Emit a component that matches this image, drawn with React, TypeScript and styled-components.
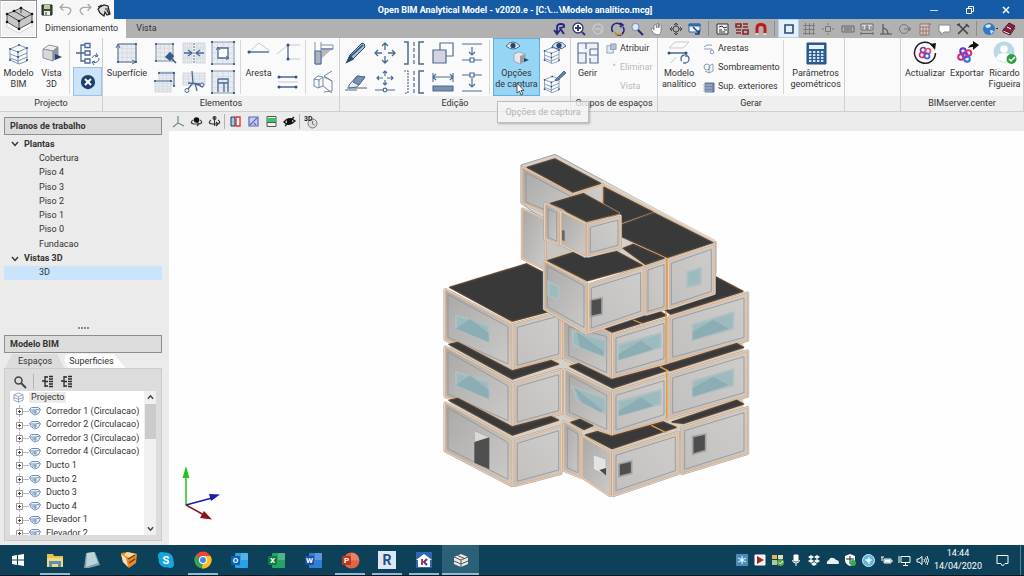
import React from "react";
import styled, { createGlobalStyle, css } from "styled-components";

const NAVY = "#4b6a96";
const SOFT = "#c3c9d2";
const INK = "#2b2b2b";

const GlobalStyle = createGlobalStyle`
  *, *::before, *::after { box-sizing: border-box; }
  html, body { margin: 0; padding: 0; }
  body {
    font-family: Roboto, "Open Sans", sans-serif;
    font-size: 9px;
    line-height: 11px;
    color: #333;
    background: #ebebeb;
  }
  button {
    font: inherit; color: inherit; background: none; border: 0; padding: 0; margin: 0;
  }
  ul { list-style: none; margin: 0; padding: 0; }
  svg { display: block; flex: none; }
`;

/* ---------- frame ---------- */

const Window = styled.div`
  display: flex;
  flex-direction: column;
  min-height: 100vh;
`;

const Header = styled.header`
  display: grid;
  grid-template-columns: 37px 1fr;
  grid-template-rows: 19px 19px;
`;

const AppButton = styled.button`
  grid-row: 1 / 3;
  display: flex;
  align-items: center;
  justify-content: center;
  background: #f2f2f2;
  border: 1px solid #8f8f8f;
  border-left-color: #cfcfcf;
  box-shadow: inset 0 0 0 1px #fff;
`;

const TitleBar = styled.div`
  display: flex;
  background: #155ba6;
`;

const QuickAccess = styled.div`
  display: flex;
  width: 77px;
  background: #f7f7f7;
`;

const Cell = styled.button<{ $muted?: boolean; $on?: boolean }>`
  flex: 1;
  display: flex;
  align-items: center;
  justify-content: center;
  opacity: ${(p) => (p.$muted ? 0.7 : 1)};
  ${(p) => p.$on && css`background: #e3effa; border: 1px solid #b7cfe4;`}
`;

const Title = styled.h1`
  flex: 1;
  margin: 0;
  font-size: 9px;
  line-height: 20px;
  font-weight: 700;
  text-align: center;
  color: #fff;
  white-space: nowrap;
`;

const WindowControls = styled.div`
  display: flex;
  width: 108px;
`;

const TabStrip = styled.div`
  display: flex;
  background: #b1b1b1;
`;

const RibbonTab = styled.button<{ $active?: boolean }>`
  padding: 0 ${(p) => (p.$active ? 8 : 10)}px;
  line-height: 19px;
  background: ${(p) => (p.$active ? "#fafafa" : "transparent")};
`;

const ViewTools = styled.div`
  display: flex;
  align-items: stretch;
  width: 474px;
  margin-left: auto;
`;

const ToolRun = styled.div<{ $w: number }>`
  display: flex;
  width: ${(p) => p.$w}px;
`;

const Rule = styled.span<{ $gap?: number; $light?: boolean }>`
  flex: none;
  width: 1px;
  margin: 2px ${(p) => p.$gap ?? 3}px;
  background: ${(p) => (p.$light ? "#b4b4b4" : "#8d8d8d")};
`;

/* ---------- ribbon ---------- */

const Ribbon = styled.div`
  display: flex;
  height: 74px;
  background: #fafafa;
  border-bottom: 1px solid #d0d0d0;
`;

const Group = styled.section<{ $w?: number }>`
  display: flex;
  flex-direction: column;
  border-right: 1px solid #cfcfcf;
  ${(p) => (p.$w ? css`flex: none; width: ${p.$w}px;` : css`flex: 1;`)}
`;

const GroupBody = styled.div<{ $pad?: number }>`
  flex: 1;
  display: flex;
  padding: 0 0 0 ${(p) => p.$pad ?? 0}px;
`;

const GroupLabel = styled.h2`
  margin: 0;
  height: 15px;
  font-size: 9px;
  line-height: 15px;
  font-weight: 400;
  text-align: center;
  white-space: nowrap;
  background: #efefef;
`;

const Big = styled.button<{ $w: number; $hot?: boolean }>`
  flex: none;
  width: ${(p) => p.$w}px;
  height: 58px;
  display: flex;
  flex-direction: column;
  align-items: center;
  gap: 3px;
  padding-top: 3px;
  white-space: pre;
  text-align: center;
  ${(p) => p.$hot && css`background: #97d5f5; box-shadow: inset 0 0 0 1px #62b0df;`}
`;

const Pairs = styled.div`
  display: grid;
  grid-auto-flow: column;
  grid-template-rows: 29px 29px;
  grid-auto-columns: 29px;
`;

const Small = styled.button<{ $on?: boolean }>`
  display: flex;
  align-items: center;
  justify-content: center;
  ${(p) => p.$on && css`background: #cde4f8; border: 1px solid #9cc4e6;`}
`;

const Split = styled.span`
  flex: none;
  width: 1px;
  margin: 2px 3px;
  background: #d6d6d6;
`;

const Lines = styled.div`
  display: flex;
  flex-direction: column;
  padding: 1px 0 0 4px;
`;

const Line = styled.button<{ $off?: boolean }>`
  display: flex;
  align-items: center;
  gap: 3px;
  height: 19px;
  white-space: nowrap;
  color: ${(p) => (p.$off ? "#b9b9b9" : "inherit")};
`;

const Anchor = styled.div`
  position: relative;
  flex: none;
`;

const Tooltip = styled.div`
  position: absolute;
  z-index: 2;
  left: 4px;
  top: 63px;
  width: 92px;
  line-height: 20px;
  text-align: center;
  white-space: nowrap;
  color: #b3b3b3;
  background: rgba(246, 246, 246, 0.75);
  border: 1px solid #bdbdbd;
  box-shadow: 1px 1px 2px rgba(0, 0, 0, 0.25);
`;

const Pointer = styled.svg`
  position: absolute;
  z-index: 3;
  left: 23px;
  top: 44px;
`;

/* ---------- work area ---------- */

const Work = styled.main`
  flex: 1;
  display: flex;
`;

const Sidebar = styled.aside`
  flex: none;
  width: 169px;
  display: flex;
  flex-direction: column;
  padding: 5px 7px 4px 4px;
`;

const PanelTitle = styled.h3`
  margin: 0;
  padding-left: 5px;
  height: 18px;
  font-size: 9px;
  line-height: 16px;
  font-weight: 700;
  background: #dcdcdc;
  border: 1px solid #8e8e8e;
`;

const PlanTree = styled.ul`
  display: grid;
  grid-auto-rows: 1fr;
  height: 143px;
  margin-top: 2px;
  margin-bottom: 42px;
`;

const PlanRow = styled.li<{ $head?: boolean; $on?: boolean }>`
  display: flex;
  align-items: center;
  gap: 5px;
  padding-left: ${(p) => (p.$head ? 7 : 35)}px;
  font-weight: ${(p) => (p.$head ? 700 : 400)};
  background: ${(p) => (p.$on ? "#c9e4fb" : "transparent")};
`;

const Grip = styled.div`
  display: flex;
  justify-content: center;
  gap: 1px;
  padding: 5px 0;
  height: 13px;
`;

const Dot = styled.i`
  width: 2px;
  height: 2px;
  background: #8a8a8a;
`;

const ModelTabs = styled.div`
  display: flex;
  height: 15px;
  padding: 1px 0 0 1px;
`;

const ModelTab = styled.button<{ $active?: boolean }>`
  height: 14px;
  padding: ${(p) => (p.$active ? "0 12px 0 13px" : "0 12px 0 5px")};
  line-height: 15px;
  background: ${(p) => (p.$active ? "#dcdcdc" : "#fdfdfd")};
  clip-path: ${(p) =>
    p.$active ? "polygon(12% 0, 88% 0, 100% 100%, 0 100%)" : "polygon(3% 0, 80% 0, 100% 100%, 6% 100%, 0 50%)"};
`;

const ModelPanel = styled.div`
  flex: 1;
  display: flex;
  flex-direction: column;
  padding: 3px 5px 5px;
  background: #dcdcdc;
  border: 1px solid #cbcbcb;
`;

const ModelTools = styled.div`
  display: flex;
  height: 19px;
  width: 66px;
`;

const TreeBox = styled.div`
  flex: 1 1 143px;
  height: 143px;
  display: flex;
  overflow: hidden;
  background: #fff;
`;

const SpaceTree = styled.ul`
  flex: 1;
  display: grid;
  grid-auto-rows: 1fr;
  height: 149px;
`;

const SpaceRow = styled.li<{ $root?: boolean }>`
  display: flex;
  align-items: center;
  gap: 5px;
  padding-left: ${(p) => (p.$root ? 3 : 6)}px;
  white-space: nowrap;
`;

const RootName = styled.span`
  padding: 0 2px;
  background: #ececec;
`;

const Scroll = styled.div`
  width: 12px;
  display: flex;
  flex-direction: column;
  align-items: center;
  justify-content: space-between;
  padding: 3px 0;
  background: #f0f0f0;
`;

const Thumb = styled.div`
  width: 11px;
  height: 35px;
  margin: 3px 0 auto;
  background: #cbcbcb;
`;

const Stage = styled.section`
  flex: 1;
  display: flex;
  flex-direction: column;
`;

const StageTools = styled.div`
  display: flex;
  height: 19px;
`;

const Canvas = styled.div`
  flex: 1;
  display: flex;
  background: #fefefe;
  svg { flex: 1; min-width: 0; }
`;

/* ---------- taskbar ---------- */

const Taskbar = styled.footer`
  display: flex;
  height: 31px;
  background: #0d4059;
  border-bottom: 1px solid #03141e;
  color: #fff;
`;

const Apps = styled.nav`
  display: flex;
  width: 479px;
`;

const AppCell = styled.button<{ $open?: boolean; $active?: boolean }>`
  flex: 1;
  display: flex;
  align-items: center;
  justify-content: center;
  background-color: ${(p) => (p.$active ? "#2c6078" : "transparent")};
  ${(p) => p.$open && css`
    background-image: linear-gradient(#8fbcd4, #8fbcd4);
    background-repeat: no-repeat;
    background-position: bottom center;
    background-size: ${p.$active ? "100%" : "30px"} 2px;
  `}
`;

const Tray = styled.div`
  display: flex;
  width: 198px;
  margin-left: auto;
`;

const Clock = styled.time`
  width: 54px;
  display: flex;
  flex-direction: column;
  justify-content: center;
  align-items: center;
  gap: 2px;
  font-size: 9px;
  line-height: 11px;
`;

const Notice = styled.div`
  display: flex;
  width: 36px;
  border-right: 1px solid #5f8090;
  margin-right: 3px;
`;

/* ---------- icons ---------- */

type IconProps = { s?: number; box?: number; c?: string; w?: number; children: React.ReactNode };
const Svg = ({ s = 24, box = 24, c = NAVY, w = 1, children }: IconProps) => (
  <svg width={s} height={s} viewBox={`0 0 ${box} ${box}`} fill="none" stroke={c} strokeWidth={w} aria-hidden="true">
    {children}
  </svg>
);

const dots = (pts: number[][], r = 1.1) =>
  pts.map(([x, y]) => <circle key={`${x}-${y}`} cx={x} cy={y} r={r} fill="#2f5384" stroke="none" />);

const Mesh = ({ x = 4, y = 4, w = 16, h = 16 }) => (
  <>
    <rect x={x} y={y} width={w} height={h} fill="#e8ebf0" stroke={SOFT} strokeWidth=".7" />
    {[1, 2, 3].map((i) => (
      <path key={i} d={`M${x + (w * i) / 4} ${y}v${h}M${x} ${y + (h * i) / 4}h${w}`} stroke="#cfd5dd" strokeWidth=".6" />
    ))}
  </>
);

const Stack = ({ c = "#6d88ad" }) => (
  <>
    <path d="M3 8l9-4 8 3v13l-8 3-9-4zM3 8l8 3 9-4M11 11v12M3 13l8 3 9-4M3 17l8 3 9-4" stroke={c} strokeWidth=".9" />
    {dots([[3, 8], [11, 11], [20, 7], [12, 4], [3, 19], [20, 19], [11, 16]], 1)}
  </>
);

const Eye = ({ x = 0, y = 0 }) => (
  <g transform={`translate(${x} ${y})`}>
    <path d="M0 5q7-8 14 0q-7 6-14 0z" fill="#dce6f1" stroke={NAVY} />
    <circle cx="7" cy="4.500" r="2.600" fill="#25476f" stroke="none" />
  </g>
);

const I: Record<string, React.ReactNode> = {
  app: (
    <Svg s={34} box={34} c="#333">
      <path d="M5 20v5l12 6 13-7v-5" fill="#fff" stroke="#c4c4c4" strokeWidth=".7" />
      <path d="M5 12l14-6 11 6v8l-13 7-12-7z" fill="#c8c8c8" strokeWidth=".8" />
      <path d="M5 12l12 7 13-7M17 19v8M12 9l12 7M19 6v5" strokeWidth=".9" />
      {[[5, 12], [12, 9], [19, 6], [30, 12], [17, 19], [5, 20], [30, 20], [17, 27]].map(([x, y]) => (
        <circle key={x * 40 + y} cx={x} cy={y} r="1.300" fill="#111" stroke="none" />
      ))}
    </Svg>
  ),
  save: <Svg s={12} box={12} c="#222"><path d="M1 1h10v10H1z" fill="#3b4b3b" /><path d="M3 1h6v4H3z" fill="#b8d098" stroke="none" /><path d="M3 7h6v4H3z" fill="#eee" stroke="none" /><path d="M5 8v3" /></Svg>,
  undo: <Svg s={13} box={12} c="#888" w={1.2}><path d="M4 1L1 4l3 3M1 4h7q3 1 3 3t-3 4" /></Svg>,
  redo: <Svg s={13} box={12} c="#888" w={1.2}><path d="M8 1l3 3-3 3M11 4H4q-3 1-3 3t3 4" /></Svg>,
  bag: <Svg s={14} box={14} c="#222" w={1.2}><path d="M3 4l4-2 4 1 2 8-3 1-2-3-1 4-4-3-2-4z" fill="#ddd" /><path d="M1 4l4-2M10 7l2 4M8 6h4" /></Svg>,
  min: <Svg s={10} box={10} c="#cfe0f2"><path d="M1 5.500h8" /></Svg>,
  max: <Svg s={10} box={10} c="#fff"><path d="M1.500 3.500h5v5h-5zM3.500 3V1.500h5v5H7" /></Svg>,
  close: <Svg s={10} box={10} c="#fff" w={1.500}><path d="M2 2l6 6M8 2L2 8" /></Svg>,

  bim: <Svg><Stack /></Svg>,
  vista3d: <Svg><path d="M3 8l6-4 9 2-5 4z" fill="#eee" stroke="#8b96a5" /><path d="M3 8l10 2v10L3 17z" fill="#d8d8d8" stroke="#8b96a5" /><path d="M13 10l5-4v9l-5 5z" fill="#8e9299" stroke="#8b96a5" /><path d="M15 13l7 3-7 3z" fill="#23466f" stroke="none" /></Svg>,
  link: <Svg w={1.300}><path d="M9 2.500h5v4H9zM9 10h5v4H9zM9 18h5v4H9zM9 4H5v16h4M0 12h9" /><path d="M16 17a4 4 0 0 1 6-2M23 17a4 4 0 0 1-6 4M20 12l2 3-3 1M18 24l-2-3 3-1" strokeWidth="1" /></Svg>,
  cancel: <Svg s={18}><circle cx="12" cy="12" r="9.500" fill="#1f3f6b" stroke="none" /><path d="M8 8l8 8M16 8l-8 8" stroke="#fff" strokeWidth="2.600" /></Svg>,
  surface: <Svg><Mesh x={3} y={3} w={18} h={18} /><path d="M3 3h18v18H3zM1 7l2-4 2 4M17 19l4 2-4 2" />{dots([[21, 3], [3, 21], [21, 21]])}</Svg>,
  surfPick: <Svg><Mesh x={3} y={3} w={17} h={17} /><path d="M3 3h17v17H3z" stroke="#8a9ab0" />{dots([[3, 3], [20, 3], [3, 20]])}<path d="M13 16l4-4 3 3-3 4zM18 17l5 5" fill="#3a5b87" stroke="#3a5b87" strokeWidth="1.600" /></Svg>,
  surfDup: <Svg><Mesh x={6} y={2} w={15} h={13} /><Mesh x={2} y={11} w={16} h={11} /><path d="M21 2v14M2 11h16M6 3h15" />{dots([[2, 11], [18, 11], [21, 16], [21, 3], [6, 3]])}</Svg>,
  surfJoin: <Svg><Mesh x={1} y={2} w={9} h={20} /><Mesh x={14} y={2} w={9} h={20} /><path d="M12 2v20" strokeDasharray="2 1" /><path d="M2 12h7M6 9l4 3-4 3M22 12h-7M18 9l-4 3 4 3" strokeWidth="1.300" /></Svg>,
  surfCut: <Svg><Mesh x={1} y={3} w={22} h={12} /><path d="M10 1l1 12M11 13l-5 6M11 13l10 4M6 13l12 1M13 13l2 8" strokeWidth="1.300" /><circle cx="5" cy="20.500" r="2" /><circle cx="20" cy="15" r="2" /></Svg>,
  surfIn: <Svg><Mesh x={1} y={1} w={22} h={22} /><path d="M1 1h22v22H1z" stroke="#9aa7ba" /><path d="M7 7h10v10H7z" fill="#fff" strokeWidth="1.300" />{dots([[1, 1], [23, 1], [1, 23], [23, 23]])}<path d="M5 9l2-3 2 3M15 15l3 2-3 2" /></Svg>,
  surfOut: <Svg><Mesh x={1} y={1} w={22} h={22} /><path d="M1 1h22v22H1z" stroke="#9aa7ba" /><path d="M7 9h10v13M7 9v13M7 13h10M13 13v9" fill="none" strokeWidth="1.300" />{dots([[1, 1], [23, 1], [1, 23], [23, 23]])}</Svg>,
  edge: <Svg><path d="M2 11L12 2l11 8" stroke={SOFT} /><path d="M2 11h20" strokeWidth="1.400" />{dots([[2, 11]], 1.500)}</Svg>,
  edgeV: <Svg><path d="M1 13L12 4h12M12 18h12" stroke={SOFT} /><path d="M12 4v14" strokeWidth="1.300" />{dots([[12, 4], [12, 18]], 1.500)}</Svg>,
  edgeH: <Svg><path d="M2 12h20" stroke={SOFT} /><path d="M3 7h17M3 17h17" strokeWidth="1.400" />{dots([[3, 7], [20, 7], [3, 17], [20, 17]], 1.500)}</Svg>,
  wall: <Svg><path d="M3 1v22h6V1M9 4h12v4H9" stroke="#7d92b0" /><path d="M9 9h10L9 18z" fill="#b8b8b8" stroke="none" /><path d="M3 10h6v13H3z" fill="#a9b3c2" /><path d="M9 8h12" /></Svg>,
  project: <Svg c="#7288a7"><path d="M2 9l4-3 5 1v9l-5 2-4-2zM2 9l5 1 4-3M7 10v8M12 6l8-5M12 6l8 5v10M20 11l-8-4M11 16l9 7M12 22l8-1" /></Svg>,
  pencil: <Svg c="#294c78"><path d="M3 21l3-7L18 2q3 0 3 4L9 18z" fill="#a9bcd4" /><path d="M3 21l3-6 3 3zM7 15L19 4" fill="#294c78" strokeWidth="1.500" /></Svg>,
  eraser: <Svg><path d="M3 18h20" stroke="#aaa" strokeWidth="2" /><path d="M5 15l8-9 8 1-8 10-8 1z" fill="#e6eaf0" /><path d="M13 6l8 1-6 8-6-3z" fill="#7990b0" /><path d="M1 20h12" /></Svg>,
  move: <Svg w={1.300}><path d="M12 2v7M12 15v7M2 12h7M15 12h7M9 5l3-3 3 3M9 19l3 3 3-3M5 9l-3 3 3 3M19 9l3 3-3 3" /></Svg>,
  moveP: <Svg w={1.200}><path d="M12 1v5M12 10v5M4 8h6M14 8h6M10 3l2-2 2 2M10 13l2 2 2-2M6 6L4 8l2 2M18 6l2 2-2 2M2 20h8M14 20h8" /><circle cx="12" cy="20" r="1.800" fill="#fff" /></Svg>,
  mirror: <Svg w={1.200}><path d="M2 1h4v22H2M22 1h-5v22h5" strokeWidth="1.500" /><path d="M12 1v22" strokeDasharray="4 2" /></Svg>,
  mirrorC: <Svg w={1.200}><path d="M22 1h-5v22h5" strokeWidth="1.500" /><path d="M2 1h4v22H2" strokeDasharray="2 1" /><path d="M12 1v22" strokeDasharray="4 2" /></Svg>,
  copy: <Svg w={1.200}><path d="M9 2h13v13H9z" fill="#fff" /><path d="M2 9h13v13H2z" fill="#d2d5dd" /></Svg>,
  measure: <Svg w={1.100}><path d="M2 3v9M22 3v9M2 7h20M5 4L2 7l3 3M19 4l3 3-3 3" /><path d="M2 16h20v5H2z" fill="#7990b0" /></Svg>,
  down: <Svg w={1.200}><path d="M2 3h20M12 6v8M9 11l3 3 3-3M2 19h20" /><path d="M10 17h4v4h-4z" fill="#fff" /></Svg>,
  down2: <Svg w={1.200}><path d="M2 5h20M12 8v9M9 14l3 3 3-3M2 21h20" /><path d="M10 3h4v4h-4z" fill="#fff" /></Svg>,
  capture: <Svg><Eye x={1} y={0} /><path d="M9 13l5-2 6 2v7l-5 3-6-3z" fill="#e8e8e8" stroke="#8a97a7" strokeWidth=".7" /><path d="M15 15l5-2v7l-5 3z" fill="#9a9fa6" stroke="none" /><path d="M19 17l5 2-5 2z" fill="#23466f" stroke="none" /></Svg>,
  layersEye: <Svg><g transform="translate(-1 3) scale(.85)"><Stack /></g><Eye x={9} y={0} /></Svg>,
  layersPen: <Svg><g transform="translate(-1 3) scale(.85)"><Stack /></g><path d="M12 10l9-9 2 2-9 8z" fill="#6681a6" /></Svg>,
  manage: <Svg c="#5b7193" w={1.200}><path d="M2 2h20v20h-8v-5M2 2v20h8V12H2M10 2v6M14 8h8M14 8v6h8" fill="#edf0f4" /></Svg>,
  assign: <Svg s={11} box={12} c="#8d9fb9"><path d="M1 3h7v8H1z" fill="#e6eaf0" /><path d="M5 1h6v6H5z" fill="#b4c0d0" /></Svg>,
  none: <Svg s={11} box={12} c="#999"><path d="M8 2l2 2M10 2L8 4" strokeWidth=".8" /></Svg>,
  blank: <Svg s={11} box={12}><g /></Svg>,
  analytic: <Svg><path d="M2 7L8 1h14M2 7h14l6-6M4 22l5-6" stroke={SOFT} /><path d="M2 12h17v4" strokeWidth="1.300" /><circle cx="18" cy="18" r="4" strokeDasharray="8 2" strokeWidth="1.300" />{dots([[2, 12], [19, 12]], 1.500)}</Svg>,
  edges: <Svg s={12} box={12} c="#8d9fb9"><path d="M1 4l3-2h5M1 6h8v2" /><circle cx="9" cy="9" r="1.800" /></Svg>,
  shade: <Svg s={12} box={12} c="#8d9fb9"><circle cx="4" cy="5" r="3" /><path d="M6 4l4-2v7l-4 2zM2 9l4 2" /></Svg>,
  ext: <Svg s={12} box={12} c="#5c7496"><path d="M2 2h9v9H2z" fill="#7388a6" /><path d="M0 4h9M0 7h9M0 10h9" stroke="#adb9c9" /></Svg>,
  calc: <Svg><path d="M3 2h19v21H3z" fill="#2d5f95" stroke="#244f80" /><path d="M5 4h15v4H5z" fill="#e9f2fb" stroke="none" />{[10, 13, 16, 19].map((y) => <path key={y} d={`M5 ${y + 1}h15`} stroke="#d4e3f2" strokeWidth="2" strokeDasharray="2.400 1.600" />)}</Svg>,
  update: <Svg><path d="M20 5A10.500 10.500 0 1 0 22.500 12" stroke="#222" strokeWidth="1.500" /><g strokeWidth="1.700"><circle cx="10" cy="9" r="2.500" stroke="#6a3bc5" /><circle cx="15" cy="10" r="2.500" stroke="#e3516b" /><circle cx="9" cy="14" r="2.500" stroke="#d8276e" /><circle cx="14" cy="15" r="2.500" stroke="#3f56e8" /></g><path d="M17 3l6-1-1 7z" fill="#111" stroke="none" /></Svg>,
  export: <Svg><g strokeWidth="2"><circle cx="8" cy="10" r="2.800" stroke="#5b35c9" /><circle cx="13.500" cy="12" r="2.800" stroke="#e3316b" /><circle cx="6" cy="16" r="2.800" stroke="#d8276e" /><circle cx="12" cy="18" r="2.800" stroke="#2f6fe0" /><circle cx="10" cy="14" r="2.500" stroke="#8b3fd0" /></g><path d="M13 7q2-4 5-4V0l6 4-6 5V6q-3 0-5 1z" fill="#111" stroke="none" /></Svg>,
  user: <Svg><circle cx="11" cy="11" r="10.500" fill="#b9d9e6" stroke="none" /><circle cx="11" cy="8" r="3.800" fill="#fff" stroke="none" /><path d="M3 18q1-6 8-6t8 6q-8 6-16 0z" fill="#fff" stroke="none" /><circle cx="18.500" cy="18" r="5" fill="#2f9e41" stroke="none" /><path d="M16 18l2 2 4-4" stroke="#fff" strokeWidth="1.500" /></Svg>,

  magnify: <Svg s={14} box={14} c="#444" w={1.500}><circle cx="5.500" cy="5.500" r="3.500" /><path d="M8 8l5 5" strokeWidth="2" /></Svg>,
  tree: <Svg s={13} box={13} c={INK} w={1.300}><path d="M1 6h3M4 1v11M4 2h3M4 6.500h3M4 11h3M8 1.500h4M8 4h4M8 6.500h4M8 9h4M8 11.500h4" /></Svg>,
  chev: <Svg s={8} box={8} c="#333" w={1.400}><path d="M1 2l3 3.500L7 2" /></Svg>,
  up: <Svg s={7} box={8} c="#444" w={1.600}><path d="M1 5.500L4 2l3 3.500" /></Svg>,
  dn: <Svg s={7} box={8} c="#444" w={1.600}><path d="M1 2.500L4 6l3-3.500" /></Svg>,
  root: <Svg s={11} box={12} c="#8da2bd"><path d="M1 3l5-2 5 2v6l-5 2-5-2zM1 3l5 2 5-2M6 5v6M1 6l5 2 5-2" /></Svg>,
};

const NodeIcon = () => (
  <svg width="25" height="12" viewBox="0 0 25 12" fill="none" aria-hidden="true">
    <path d="M3.500 0v12M7 6.500h6" stroke="#bbb" />
    <path d="M.5 3.500h6v6h-6z" fill="#fff" stroke="#999" />
    <path d="M2 6.500h3M3.500 5v3" stroke="#444" />
    <path d="M13.500 4.500l2-2h7l2 2-2 4-4 1.500-3-2zM14 5h6l4-1M19 5v4M16 7h5" fill="#edf2f8" stroke="#6f8fb8" />
  </svg>
);

const viewIcons: React.ReactNode[] = [
  <Svg s={14} box={14} c="#26267f" w={1.800}><path d="M4 5q0-3 4-3t3 3l-4 1 4 6M4 5v6M1 8l3 4 3-4" /></Svg>,
  <Svg s={14} box={14} c="#33337a" w={1.300}><circle cx="6" cy="6" r="5" fill="#fff" /><path d="M6 3v6M3 6h6" strokeWidth="2" /><path d="M10 10l3 3" strokeWidth="2" /></Svg>,
  <Svg s={14} box={14} c="#c8c8c8" w={1.400}><circle cx="7" cy="7" r="5" /><path d="M4 7h6v4" /></Svg>,
  <Svg s={14} box={14} c="#26267f" w={1.600}><path d="M2 10a5 5 0 0 1 8-7M12 5a5 5 0 0 1-8 6M9 1l3 2-3 2" /><path d="M3 12h8" stroke="#d7a52a" /></Svg>,
  <Svg s={14} box={14} c="#7f97bb" w={1.200}><circle cx="5.500" cy="5" r="3.500" fill="#dceaf8" /><path d="M8 8l5 5" stroke="#26267f" strokeWidth="2" /></Svg>,
  <Svg s={14} box={14} c="#777"><path d="M4 12L1 7l2-1 1 2V3l1.500-1L7 6V1.500h1.500V6L10 2.500l1 1V10l-2 3z" fill="#fff" strokeWidth=".8" /></Svg>,
  <Svg s={14} box={14} c="#444"><path d="M7 1v12M1 7h12M5 3l2-2 2 2M5 11l2 2 2-2M3 5L1 7l2 2M11 5l2 2-2 2" /><circle cx="7" cy="7" r="3" fill="#b1b1b1" /></Svg>,
  <Svg s={14} box={14} c="#2f6ea8"><path d="M1 2h11v8H1z" fill="#eef5fc" /><path d="M1 2h11v2H1z" fill="#2f6ea8" /><path d="M5 5l6 6M11 8v4H7" stroke="#143a80" strokeWidth="1.400" /></Svg>,
  <Svg s={14} box={14} c="#333"><path d="M2 2h11v10H2z" fill="#eee" /><path d="M4 5l3-1 2 2 3-1M4 8h3M9 8h3M4 10h6" /></Svg>,
  <Svg s={14} box={14} c="#8b2222" w={1.600}><path d="M1 2h5v3H1zM8 2h5M8 5h5M1 8h5M1 11h5M8 8h5v4H8z" /></Svg>,
  <Svg s={14} box={14} c="#c21a1a" w={3}><path d="M3 12V6q0-3.500 4-3.500T11 6v6" /><path d="M3 13v-2M11 13v-2" stroke="#ddd" /></Svg>,
  <Svg s={14} box={14} c="#274c7c" w={1.600}><path d="M3 3h8v8H3z" /></Svg>,
  <Svg s={14} box={14} c="#777"><path d="M3.500 1v12M7.500 1v12M11.500 1v12M1 3.500h12M1 7.500h12M1 11.500h12" strokeWidth=".9" /></Svg>,
  <Svg s={14} box={14} c="#777"><path d="M4.500 4.500h5v5h-5zM7 1v2M7 11v2M1 7h2M11 7h2" /></Svg>,
  <Svg s={14} box={14} c="#666"><path d="M1 4h12v6H1zM3 6h8M3 8h8" /></Svg>,
  <Svg s={14} box={14} c="#666"><path d="M1 2h12v6H1z" fill="#ddd" /><path d="M3 4v3M6 4v3h2V4zM11 4v3M1 10v3M13 10v3M1 11.500h12" /></Svg>,
  <Svg s={14} box={14} c="#555" w={1.200}><path d="M4 2v10h9M1 12h3M4 6q5 1 5 6" /></Svg>,
  <Svg s={14} box={14} c="#777"><circle cx="6" cy="7" r="4.500" /><path d="M6 7h7M11 5l2 2-2 2" /></Svg>,
  <Svg s={14} box={14} c="#94766c"><path d="M2 2h9v11H2z" fill="#d8c8c0" /><path d="M2 5h9M5 5v8M8 5v8M2 9h9M11 1l2 2" /></Svg>,
  <Svg s={14} box={14} c="#888"><path d="M2 3h11v7H7l-3 3v-3H2z" fill="#fff" /></Svg>,
  <Svg s={14} box={14} c="#444" w={1.600}><path d="M2 12l9-9M3 3l9 9M1 3l3-1M10 2l3 3" /></Svg>,
  <Svg s={16} box={16} c="#1b4f9c"><circle cx="7" cy="8" r="6" fill="#2f79c8" stroke="none" /><path d="M3 5q3-3 6-1 0 3-4 3zM8 9l4 1-3 3z" fill="#d9ecfb" stroke="none" /><path d="M14 7l1 1 1-1" stroke="#333" /></Svg>,
  <Svg s={16} box={16} c="#5a1024"><path d="M1 9l6-7 6 3-5 7z" fill="#8c1f3d" /><path d="M1 9l7 3v2l-7-3zM8 14l5-7" fill="#fff" /><path d="M5 6l4 2" stroke="#fff" /></Svg>,
];

const stageIcons: React.ReactNode[] = [
  <Svg s={13} box={13} c="#6f8a8a" w={1.200}><path d="M6 1v7M6 8l-5 4M6 8l6 3" /></Svg>,
  <Svg s={13} box={13} c="#444" w={1.200}><path d="M3 5q-4 3 1 4h5q5-1 1-4M7 7l2 2-2 2" /><circle cx="6.500" cy="5" r="2.800" fill="#111" stroke="none" /></Svg>,
  <Svg s={13} box={13} c="#333" w={1.100}><path d="M6.500 2v9M3 5q-4 3 1 4h5q5-1 1-4M8 11l2-2-2-2" /><circle cx="6.500" cy="3" r="1.500" /></Svg>,
  <Svg s={13} box={13} c="#335"><path d="M2 2h4v9H2z" fill="#9ccbe8" /><path d="M7 2h4v9H7z" fill="#fff" stroke="#d33" strokeWidth="1.400" /></Svg>,
  <Svg s={13} box={13} c="#5b66b8" w={1.200}><path d="M2 2h9v9H2z" fill="#c9cef0" /><path d="M3 10l7-7M7 8l2 2" /></Svg>,
  <Svg s={13} box={13} c="#555"><path d="M2 1.500h9v10H2z" fill="#eee" /><path d="M2 3h9v4H2z" fill="#43bf63" stroke="none" /><path d="M2 7.500h9" /></Svg>,
  <Svg s={13} box={13} c="#111" w={1.300}><path d="M1 7q5-6 11-1-6 6-11 1z" fill="#fff" /><circle cx="6.500" cy="6.500" r="2.200" fill="#111" /><path d="M2 11l9-9" /></Svg>,
];

/* ---------- building ---------- */

const Face = ({ p, f = "url(#front)" }: { p: string; f?: string }) => (
  <g strokeLinejoin="round">
    <polygon points={p} fill={f} stroke="#a19e9c" strokeWidth="11" />
    <polygon points={p} fill={f} stroke="#e0d8d0" strokeWidth="8" />
    <polygon points={p} fill={f} stroke="#e5b180" strokeWidth="3" />
  </g>
);

const Inner = ({ p }: { p: string }) => <polygon points={p} fill="none" stroke="#96938f" strokeWidth="2.500" strokeLinejoin="round" />;

const Roof = ({ p }: { p: string }) => (
  <g strokeLinejoin="round">
    <polygon points={p} fill="#3a3939" stroke="#e0a56c" strokeWidth="7" />
    <polygon points={p} fill="#3a3939" stroke="#4a4440" strokeWidth="4" />
  </g>
);

const Glass = ({ p, q }: { p: string; q?: string }) => (
  <>
    <polygon points={p} fill="#9dbabf" stroke="#b0bfc2" strokeWidth="6" />
    {q && <polygon points={q} fill="#8cadb3" />}
  </>
);

const Opening = ({ p }: { p: string }) => <polygon points={p} fill="#4f4e4e" stroke="#a3a1a0" strokeWidth="5" />;

const Building = () => (
  <g transform="translate(420 140) scale(.33333)">
    <polygon points="303,75 405,43 888,305 888,400 600,400 303,190" fill="#d3d0cd" stroke="#a5a2a0" strokeWidth="3" />
    <polygon points="372,240 520,300 520,380 372,400" fill="#c9c5c1" />
    <polygon points="90,590 276,680 430,640 575,710 740,665 970,595 970,870 575,940 430,870 276,900 90,790" fill="#d8cfc6" />
    <Face p="308,208 375,240 375,385 308,354" f="url(#side)" />
    <Face p="308,84 460,162 460,250 308,188" f="url(#side)" />
    <Inner p="318,98 450,168 450,240 318,186" />
    <Face p="462,162 548,134 548,250 462,250" />
    <Roof p="322,82 405,57 541,130 458,156" />
    <Roof p="552,142 698,216 606,248 552,215" />
    <Roof p="606,254 702,219 878,308 742,352 606,290" />
    <path d="M545 124L884 302" stroke="#dcd6d0" strokeWidth="7" />
    <path d="M545 129L884 307" stroke="#e7b98e" strokeWidth="2" />

    <Face p="750,530 982,460 982,600 750,664" />
    <Inner p="758,538 972,474 972,592 758,652" />
    <Glass p="818,554 940,518 940,566 818,600" q="818,575 880,540 926,566 818,600" />
    <Roof p="752,522 735,510 885,462 885,410 968,454" />

    <Face p="76,450 275,554 275,688 76,598" f="url(#side)" />
    <Inner p="84,464 264,560 264,672 84,592" />
    <Glass p="108,526 206,556 206,606 108,566" q="108,566 150,536 206,580 206,606" />
    <Face p="284,552 422,516 422,650 284,686" />
    <Inner p="292,562 416,528 416,642 292,676" />
    <Roof p="90,442 320,372 370,398 370,505 384,515 276,543" />

    <Face p="432,545 570,576 570,714 432,654" f="url(#side)" />
    <Inner p="446,560 560,590 560,698 446,646" />
    <Glass p="458,572 556,602 556,650 458,615" q="470,574 550,634 550,648 480,622" />
    <Face p="580,584 742,536 742,668 580,712" />
    <Inner p="588,594 732,550 732,656 588,698" />
    <Glass p="596,614 722,580 722,622 596,660" q="596,642 664,602 700,628 596,660" />
    <Roof p="556,566 718,514 738,526 576,576" />
    <path d="M640 540l30 12M738 514v156" stroke="#df9a4c" strokeWidth="4" />

    <Face p="76,622 275,730 275,858 76,768" f="url(#side)" />
    <Inner p="84,636 264,738 264,842 84,762" />
    <Glass p="108,696 206,726 206,776 108,736" q="108,736 150,706 206,750 206,776" />
    <Face p="284,730 422,690 422,820 284,856" />
    <Inner p="292,740 416,704 416,812 292,846" />
    <Roof p="88,613 113,607 277,693 393,662 415,672 277,717" />
    <Face p="436,690 570,756 570,884 436,824" f="url(#side)" />
    <Inner p="448,706 560,766 560,868 448,816" />
    <Glass p="458,740 556,776 556,820 470,780" q="462,742 550,812 540,816 484,786" />
    <Face p="750,706 982,634 982,768 750,832" />
    <Inner p="758,714 972,650 972,758 758,820" />
    <Glass p="818,724 940,688 940,736 818,770" q="818,745 880,710 926,736 818,770" />
    <Face p="580,756 742,708 742,836 580,884" />
    <Inner p="588,766 732,722 732,824 588,870" />
    <Glass p="596,784 722,750 722,792 596,828" q="596,812 664,772 700,798 596,828" />
    <Roof p="450,679 476,671 575,719 720,681 738,692 578,744" />
    <Roof p="724,680 950,611 970,622 750,692" />
    <path d="M740 688v148M720 680l22 12" stroke="#df9a4c" strokeWidth="4" />

    <Face p="76,790 275,900 275,1036 76,932" f="url(#side)" />
    <Inner p="84,804 264,908 264,1018 84,926" />
    <polygon points="163,872 208,892 208,988 163,968" fill="#504f4f" />
    <polygon points="163,872 208,892 163,906" fill="#d9d8d6" />
    <Face p="284,900 422,860 422,1000 284,1036" />
    <Inner p="292,910 416,872 416,990 292,1024" />
    <Roof p="88,781 113,775 277,861 393,830 415,840 277,885" />
    <Face p="432,846 480,874 480,1010 432,990" f="url(#side)" />
    <Inner p="442,862 474,882 474,998 442,984" />
    <Roof p="453,847 480,838 518,857 492,868" />
    <Face p="786,864 982,804 982,940 786,1000" />
    <Inner p="794,872 972,818 972,932 794,988" />
    <Roof p="757,846 950,781 970,792 790,850" />
    <Face p="488,890 570,940 570,1066 488,1012" f="url(#side)" />
    <polygon points="520,944 558,958 558,1006 520,988" fill="#e4e3e1" stroke="#aaa" strokeWidth="2" />
    <polygon points="538,990 558,984 558,1006" fill="#4a4949" />
    <Face p="580,938 774,878 774,1000 580,1066" />
    <Inner p="588,946 766,890 766,992 588,1052" />
    <Roof p="497,885 532,875 575,889 730,846 768,862 576,926" />
    <path d="M694 856l44 22" stroke="#df9a4c" strokeWidth="4" />
    <Opening p="597,972 635,963 635,1000 597,1010" />
    <Opening p="818,890 857,882 857,932 818,943" />

    <Face p="678,384 740,362 740,504 678,522" />
    <Inner p="684,390 732,374 732,500 684,514" />
    <Face p="748,360 882,314 882,460 748,504" />
    <Inner p="754,370 874,328 874,454 754,494" />
    <Glass p="802,396 842,384 842,432 802,442" />
    <Roof p="610,325 640,313 732,354 676,373" />
    <path d="M740 356v150M672 380v140" stroke="#df9a4c" strokeWidth="5" />
    <Face p="374,366 500,432 500,580 374,506" f="url(#side)" />
    <Inner p="382,378 492,438 492,562 382,500" />
    <Glass p="385,425 416,440 416,478 385,466" />
    <Face p="508,434 670,384 670,522 508,576" />
    <Inner p="514,444 662,398 662,514 514,564" />
    <Opening p="512,480 546,473 546,522 512,530" />
    <Roof p="384,362 462,337 500,350 590,335 666,376 502,422" />

    <Face p="376,192 416,212 416,312 376,296" f="url(#side)" />
    <Inner p="384,206 410,218 410,304 384,292" />
    <Face p="424,216 496,252 496,348 424,312" f="url(#side)" />
    <polygon points="426,270 434,272 434,304 426,300" fill="#666" />
    <Face p="504,254 600,228 600,324 504,348" />
    <Inner p="511,262 594,240 594,316 511,338" />
    <Roof p="392,190 490,161 597,220 500,244 440,214 430,206" />
  </g>
);

const Arrow = ({ c, d, head }: { c: string; d: string; head: string }) => (
  <>
    <path d={d} stroke={c} strokeWidth="1.500" />
    <polygon points={head} fill={c} />
  </>
);

const Scene = () => (
  <svg viewBox="169 131 855 414" fill="none" role="img" aria-label="3D">
    <defs>
      <linearGradient id="front" x1="0" y1="1" x2="1" y2="0">
        <stop offset="0" stopColor="#c1c0bf" />
        <stop offset="1" stopColor="#cfcdcc" />
      </linearGradient>
      <linearGradient id="side" x1="0" y1="0" x2="1" y2="1">
        <stop offset="0" stopColor="#aaa9a8" />
        <stop offset="1" stopColor="#cdcbca" />
      </linearGradient>
    </defs>
    <Building />
    <Arrow c="#21c321" d="M186 505V475" head="182.500,478 186,466 189.500,478" />
    <Arrow c="#1b1bb0" d="M186 505l26-7" head="209,494 220,494.500 211,501" />
    <Arrow c="#8a1515" d="M186 505l18 10" head="204,511 212,519.500 200,518" />
  </svg>
);

/* ---------- taskbar icons ---------- */

const Letter = ({ c, t, dark, round }: { c: string; t: string; dark: string; round?: boolean }) => (
  <Svg s={19} box={19} c="none">
    {round ? <circle cx="10.500" cy="9.500" r="8" fill={c} /> : <rect x="5" y="2" width="13" height="15" rx="1" fill={c} />}
    <path d={round ? "M10 1.500a8 8 0 0 1 8 8h-8z" : "M11 2h7v7h-7z"} fill="#fff" opacity=".2" />
    <rect x="1" y="5" width="9" height="9" rx="1" fill={dark} />
    <text x="5.500" y="12.200" textAnchor="middle" fontSize="8" fontWeight="700" fill="#fff" stroke="none">{t}</text>
  </Svg>
);

const apps: { name: string; open?: boolean; active?: boolean; icon: React.ReactNode }[] = [
  { name: "Windows", icon: <Svg s={14} box={14} c="none"><path d="M1 3l5-1v4.500H1zM7 2l6-1v5.500H7zM1 7.500h5V12l-5-1zM7 7.500h6V13l-6-1z" fill="#fff" /></Svg> },
  { name: "Explorador", open: true, icon: <Svg s={18} box={18} c="none"><path d="M1 3h6l1 2h9v11H1z" fill="#e8c04c" /><path d="M1 7h16v9H1z" fill="#f4d97c" /><path d="M3 10h12v6h-3v-3H6v3H3z" fill="#5a8fb8" /></Svg> },
  { name: "Notas", icon: <Svg s={18} box={18} c="none"><path d="M3 2l9-1 5 13-11 3H1z" fill="#7fa0ac" /><path d="M4 2l7-1 4 11-12 4z" fill="#bcd3da" /></Svg> },
  { name: "Cype", icon: <Svg s={18} box={18} c="none"><path d="M1 2l7-1 9 2-1 9-7 5-6-6z" fill="#e78a22" /><path d="M1 3l5 4 2 9-5-5z" fill="#f8e2bd" /><path d="M7 1l9 2-7 4-5-3z" fill="#f9d9a0" /><path d="M8 8l7-4M9 12l6-4" stroke="#6b3407" strokeWidth="1.200" /></Svg> },
  { name: "Skype", icon: <Svg s={18} box={18} c="none"><circle cx="9" cy="9" r="7.500" fill="#16a5e0" /><circle cx="5" cy="5" r="4" fill="#16a5e0" /><circle cx="13" cy="13" r="4" fill="#16a5e0" /><text x="9" y="13" textAnchor="middle" fontSize="11" fontWeight="700" fill="#fff">S</text></Svg> },
  { name: "Chrome", open: true, icon: <Svg s={18} box={18} c="none"><circle cx="9" cy="9" r="8.500" fill="#e8453c" /><path d="M9 9L1.600 4.800A8.500 8.500 0 0 0 9 17.500z" fill="#33a852" /><path d="M9 9l-1 8.400A8.500 8.500 0 0 0 16.600 5H9z" fill="#fbc116" /><circle cx="9" cy="9" r="4" fill="#fff" /><circle cx="9" cy="9" r="3" fill="#4285f4" /></Svg> },
  { name: "Outlook", icon: <Letter c="#2aa0e6" dark="#0a63b8" t="O" /> },
  { name: "Excel", icon: <Letter c="#25a465" dark="#117a40" t="X" /> },
  { name: "Word", icon: <Letter c="#2f7fd8" dark="#1a4fa8" t="W" /> },
  { name: "PowerPoint", open: true, icon: <Letter c="#e2633f" dark="#b93a1d" t="P" round /> },
  { name: "Revit", open: true, icon: <Svg s={18} box={18} c="none"><path d="M0 0h18v18H0z" fill="#dfe8f2" /><text x="9" y="14" textAnchor="middle" fontSize="14" fontWeight="700" fill="#1e4f94">R</text></Svg> },
  { name: "Cypecad", open: true, icon: <Svg s={18} box={18} c="none"><path d="M1 1h16v16H1z" fill="#2f67b2" /><path d="M9 3l8 6h-2v7H3V9H1z" fill="#fff" /><path d="M7 8v6" stroke="#d33" strokeWidth="2" /><path d="M12 8l-3 3 3 3" stroke="#50339b" strokeWidth="2" /></Svg> },
  { name: "Open BIM", open: true, active: true, icon: <Svg s={16} box={16} c="none"><path d="M1 5l7-3 7 3v7l-7 3-7-3z" fill="#e8e8e8" /><path d="M1 5l7 3 7-3M8 8v7M1 9l7 3 7-3M4.500 3.500l7 3" stroke="#555" /></Svg> },
];

const tray: [string, React.ReactNode][] = [
  ["Rede Bim", <Svg s={12} box={12} c="none"><path d="M0 0h12v12H0z" fill="#4a8db8" /><path d="M6 2v8M2 4l8 4M10 4L2 8" stroke="#e6f3fa" /><circle cx="6" cy="6" r="2" fill="#cfe6f2" /></Svg>],
  ["Gravador", <Svg s={12} box={12} c="none"><path d="M1 1h10v10H1z" fill="#f5f5f5" stroke="#fff" /><path d="M3 2l7 4-7 4z" fill="#b3202f" /></Svg>],
  ["Gestor", <Svg s={12} box={12} c="none"><path d="M0 1h5v4H0z" fill="#e7b64a" /><path d="M6 1h5v4H6z" fill="#e0ddd0" /><path d="M0 6h5v5H0z" fill="#a9c7a0" /><circle cx="8.500" cy="8.500" r="3.500" fill="#56a846" /><path d="M7 8.500l1.500 1.500L11 7" stroke="#fff" /></Svg>],
  ["Microfone", <Svg s={12} box={12} c="#fff"><path d="M4 1h4v6H4z" fill="#fff" /><path d="M2.500 6q0 3 3.500 3t3.500-3M6 9v3" /></Svg>],
  ["Dropbox", <Svg s={12} box={12} c="none"><path d="M3 1l3 2-3 2-3-2zM9 1l3 2-3 2-3-2zM3 5l3 2-3 2-3-2zM9 5l3 2-3 2-3-2zM6 8l3 2-3 2-3-2z" fill="#fff" /></Svg>],
  ["OneDrive", <Svg s={13} box={13} c="none"><path d="M1 10q-1-3 2-4 1-3 4-2 2 0 3 2 3 0 3 3 0 1-1 1z" fill="#e9eff2" /></Svg>],
  ["Segurança", <Svg s={12} box={12} c="none"><path d="M6 0l5 2v4q0 4-5 6-5-2-5-6V2z" fill="#fff" /><path d="M6 2v8M2 5h8" stroke="#223" /><circle cx="9" cy="9" r="3" fill="#3aaa4a" /></Svg>],
  ["Rede", <Svg s={13} box={13} c="none"><circle cx="6.500" cy="6.500" r="6" fill="#5db7dc" stroke="#d7eef7" /><path d="M3 6h7M7 3v7" stroke="#fff" /><circle cx="6.500" cy="6.500" r="2" fill="#fff" /></Svg>],
  ["Bateria", <Svg s={13} box={13} c="#fff"><path d="M4 5h7v4H4zM12 6v2M1 3h3M2 3v4" /><path d="M5 6h5v2H5z" fill="#fff" /></Svg>],
  ["Ecrã", <Svg s={13} box={13} c="#fff"><path d="M3 2.500h9v6H3zM1 2v7M5 11.500h5M7.500 9v2" /></Svg>],
  ["Volume", <Svg s={13} box={13} c="#fff"><path d="M1 5v3h2l3 2.500v-8L3 5zM8 5q1 1.500 0 3M9.500 3.500q2 3 0 6M11 2q3 4.500 0 9" /></Svg>],
];

/* ---------- page ---------- */

const plans: [string, boolean?, boolean?][] = [
  ["Plantas", true], ["Cobertura"], ["Piso 4"], ["Piso 3"], ["Piso 2"], ["Piso 1"], ["Piso 0"], ["Fundacao"],
  ["Vistas 3D", true], ["3D", false, true],
];

const spaces = [
  "Corredor 1 (Circulacao)", "Corredor 2 (Circulacao)", "Corredor 3 (Circulacao)", "Corredor 4 (Circulacao)",
  "Ducto 1", "Ducto 2", "Ducto 3", "Ducto 4", "Elevador 1", "Elevador 2",
];

const Tools = ({ names }: { names: string[] }) => (
  <Pairs>
    {names.map((n) => (
      <Small key={n} $on={n === "cancel"} aria-label={n}>{I[n]}</Small>
    ))}
  </Pairs>
);

const Cells = ({ icons, label, on }: { icons: React.ReactNode[]; label: string; on?: boolean }) => (
  <>
    {icons.map((icon, i) => (
      <Cell key={i} aria-label={`${label} ${i + 1}`} $on={on && i === 0}>{icon}</Cell>
    ))}
  </>
);

export default function App() {
  return (
    <>
      <GlobalStyle />
      <Window>
        <Header>
          <AppButton aria-label="Menu">{I.app}</AppButton>
          <TitleBar>
            <QuickAccess>
              <Cell aria-label="Guardar">{I.save}</Cell>
              <Cell aria-label="Anular" $muted>{I.undo}</Cell>
              <Cell aria-label="Refazer" $muted>{I.redo}</Cell>
              <Cell aria-label="Obra">{I.bag}</Cell>
            </QuickAccess>
            <Title>Open BIM Analytical Model - v2020.e - [C:\...\Modelo analítico.mcg]</Title>
            <WindowControls>
              <Cell aria-label="Minimizar">{I.min}</Cell>
              <Cell aria-label="Restaurar">{I.max}</Cell>
              <Cell aria-label="Fechar">{I.close}</Cell>
            </WindowControls>
          </TitleBar>
          <TabStrip>
            <RibbonTab $active>Dimensionamento</RibbonTab>
            <RibbonTab>Vista</RibbonTab>
            <ViewTools>
              <ToolRun $w={155}><Cells label="Ver" icons={viewIcons.slice(0, 8)} /></ToolRun>
              <Rule />
              <ToolRun $w={59}><Cells label="Capturas" icons={viewIcons.slice(8, 11)} /></ToolRun>
              <Rule />
              <ToolRun $w={195}><Cells label="Desenho" icons={viewIcons.slice(11, 21)} on /></ToolRun>
              <Rule />
              <ToolRun $w={40}><Cells label="Ajuda" icons={viewIcons.slice(21)} /></ToolRun>
            </ViewTools>
          </TabStrip>
        </Header>

        <Ribbon>
          <Group $w={103}>
            <GroupBody>
              <Big $w={37}>{I.bim}{"Modelo\nBIM"}</Big>
              <Big $w={29}>{I.vista3d}{"Vista\n3D"}</Big>
              <Split />
              <Tools names={["link", "cancel"]} />
            </GroupBody>
            <GroupLabel>Projecto</GroupLabel>
          </Group>
          <Group $w={237}>
            <GroupBody $pad={1}>
              <Big $w={46}>{I.surface}Superfície</Big>
              <Tools names={["surfPick", "surfDup", "surfJoin", "surfCut", "surfIn", "surfOut"]} />
              <Split />
              <Big $w={29}>{I.edge}Aresta</Big>
              <Tools names={["edgeV", "edgeH"]} />
              <Split />
              <Tools names={["wall", "project"]} />
            </GroupBody>
            <GroupLabel>Elementos</GroupLabel>
          </Group>
          <Group $w={231}>
            <GroupBody $pad={1}>
              <Tools names={["pencil", "eraser", "move", "moveP", "mirror", "mirrorC", "copy", "measure", "down", "down2"]} />
              <Split />
              <Anchor>
                <Big $w={47} $hot>{I.capture}{"Opções\nde captura"}</Big>
                <Pointer width="9" height="14" viewBox="0 0 9 14" aria-hidden="true">
                  <path d="M1 1v10l2.500-2 1.500 4 2-1-2-3.500H8z" fill="#fff" stroke="#333" strokeWidth=".8" />
                </Pointer>
                <Tooltip role="tooltip">Opções de captura</Tooltip>
              </Anchor>
              <Tools names={["layersEye", "layersPen"]} />
            </GroupBody>
            <GroupLabel>Edição</GroupLabel>
          </Group>
          <Group $w={87}>
            <GroupBody $pad={2}>
              <Big $w={29}>{I.manage}Gerir</Big>
              <Lines>
                <Line>{I.assign}Atribuir</Line>
                <Line $off disabled>{I.none}Eliminar</Line>
                <Line $off disabled>{I.blank}Vista</Line>
              </Lines>
            </GroupBody>
            <GroupLabel>Grupos de espaços</GroupLabel>
          </Group>
          <Group $w={187}>
            <GroupBody $pad={1}>
              <Big $w={40}>{I.analytic}{"Modelo\nanalítico"}</Big>
              <Lines>
                <Line>{I.edges}Arestas</Line>
                <Line>{I.shade}Sombreamento</Line>
                <Line>{I.ext}Sup. exteriores</Line>
              </Lines>
              <Split />
              <Big $w={58}>{I.calc}{"Parâmetros\ngeométricos"}</Big>
            </GroupBody>
            <GroupLabel>Gerar</GroupLabel>
          </Group>
          <Group>
            <GroupBody />
            <GroupLabel />
          </Group>
          <Group $w={123}>
            <GroupBody $pad={1}>
              <Big $w={46}>{I.update}Actualizar</Big>
              <Big $w={38}>{I.export}Exportar</Big>
              <Big $w={37}>{I.user}{"Ricardo\nFigueira"}</Big>
            </GroupBody>
            <GroupLabel>BIMserver.center</GroupLabel>
          </Group>
        </Ribbon>

        <Work>
          <Sidebar>
            <PanelTitle>Planos de trabalho</PanelTitle>
            <PlanTree>
              {plans.map(([name, head, on]) => (
                <PlanRow key={name} $head={head} $on={on}>{head && I.chev}{name}</PlanRow>
              ))}
            </PlanTree>
            <Grip><Dot /><Dot /><Dot /><Dot /></Grip>
            <PanelTitle>Modelo BIM</PanelTitle>
            <ModelTabs>
              <ModelTab $active>Espaços</ModelTab>
              <ModelTab>Superficies</ModelTab>
            </ModelTabs>
            <ModelPanel>
              <ModelTools>
                <Cell aria-label="Procurar">{I.magnify}</Cell>
                <Rule $gap={4} $light />
                <Cell aria-label="Expandir">{I.tree}</Cell>
                <Cell aria-label="Contrair">{I.tree}</Cell>
              </ModelTools>
              <TreeBox>
                <SpaceTree>
                  <SpaceRow $root>{I.root}<RootName>Projecto</RootName></SpaceRow>
                  {spaces.map((name) => (
                    <SpaceRow key={name}><NodeIcon />{name}</SpaceRow>
                  ))}
                </SpaceTree>
                <Scroll>{I.up}<Thumb />{I.dn}</Scroll>
              </TreeBox>
            </ModelPanel>
          </Sidebar>
          <Stage>
            <StageTools>
              <ToolRun $w={54}><Cells label="Eixos" icons={stageIcons.slice(0, 3)} /></ToolRun>
              <Rule $gap={1} $light />
              <ToolRun $w={72}><Cells label="Corte" icons={stageIcons.slice(3)} /></ToolRun>
              <Rule $gap={1} $light />
              <ToolRun $w={20}>
                <Cell aria-label="Vista 3D">
                  <Svg s={14} box={14} c="#777">
                    <circle cx="8.500" cy="8.500" r="4.500" fill="#ddd" />
                    <path d="M8.500 6v3l2 1" />
                    <text x="0" y="6" fontSize="7" fontWeight="700" fill="#222" stroke="none">3D</text>
                  </Svg>
                </Cell>
              </ToolRun>
            </StageTools>
            <Canvas><Scene /></Canvas>
          </Stage>
        </Work>

        <Taskbar>
          <Apps>
            {apps.map((a) => (
              <AppCell key={a.name} aria-label={a.name} $open={a.open} $active={a.active}>{a.icon}</AppCell>
            ))}
          </Apps>
          <Tray>
            {tray.map(([name, icon]) => <Cell key={name} aria-label={name}>{icon}</Cell>)}
          </Tray>
          <Clock><span>14:44</span><span>14/04/2020</span></Clock>
          <Notice>
            <Cell aria-label="Notificações">
              <Svg s={13} box={13} c="#fff"><path d="M1 1.500h11v8H9l-2.500 2.500L5 9.500H1z" /></Svg>
            </Cell>
          </Notice>
        </Taskbar>
      </Window>
    </>
  );
}
